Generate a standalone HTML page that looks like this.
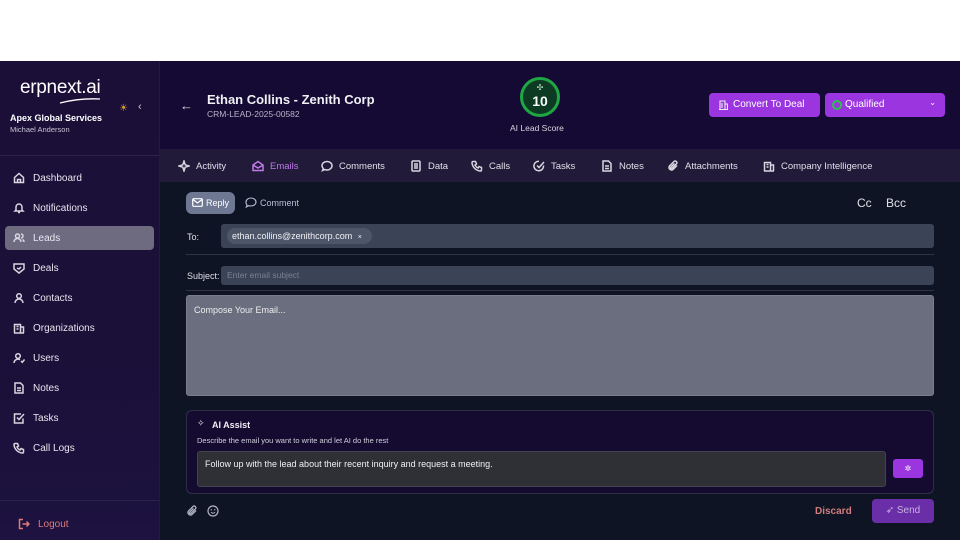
<!DOCTYPE html>
<html><head><meta charset="utf-8"><style>
*{box-sizing:border-box;margin:0;padding:0}
body{width:960px;height:540px;background:#fff;font-family:"Liberation Sans",sans-serif;position:relative;overflow:hidden;color:#e6e6ee}
.abs{position:absolute}
#sb{left:0;top:61px;width:160px;height:479px;background:linear-gradient(#1b0f38,#1a1038 60%,#1d1240);border-right:1px solid #241a3c}
#hdr{left:160px;top:61px;width:800px;height:88px;background:#150a33}
#tabs{left:160px;top:149px;width:800px;height:33px;background:#211a38}
#main{left:160px;top:182px;width:800px;height:358px;background:#0e1424}
.nav{position:absolute;left:13px;font-size:10px;color:#e8e6f0;display:flex;align-items:center;gap:8px}
.nav svg{width:12px;height:12px;stroke:#d8d6e0;fill:none;stroke-width:1.5}
.tab{position:absolute;top:160px;font-size:9.5px;color:#e0e0ea;display:flex;align-items:center;gap:6px}
.tab svg{width:12px;height:12px;stroke:#d8d6e0;fill:none;stroke-width:1.5}
.btn{position:absolute;top:32px;height:24px;background:#9a35e0;border-radius:4px;font-size:10px;color:#fff;line-height:24px}
</style></head><body>
<div id="sb" class="abs">
  <div class="abs" style="left:20px;top:16px;font-size:19px;color:#fff;letter-spacing:-0.3px">erpnext.ai</div>
  <svg class="abs" style="left:58px;top:36px" width="44" height="8"><path d="M2 6 Q22 1 42 2" stroke="#fff" fill="none" stroke-width="1.3"/></svg>
  <div class="abs" style="left:119px;top:42px;color:#e0a030;font-size:10px">☀</div>
  <div class="abs" style="left:138px;top:40px;color:#ccc;font-size:11px">‹</div>
  <div class="abs" style="left:10px;top:52px;font-size:9px;font-weight:bold;color:#fff">Apex Global Services</div>
  <div class="abs" style="left:10px;top:64px;font-size:7.5px;color:#c8c4d4">Michael Anderson</div>
  <div class="abs" style="left:0;top:94px;width:159px;height:1px;background:#2d2150"></div>
  <div class="abs" style="left:5px;top:165px;width:149px;height:24px;background:#6e6a80;border-radius:4px"></div>
  <div class="abs" style="left:0;top:439px;width:159px;height:1px;background:#2d2150"></div>
</div>
<div class="nav" style="top:172px"><svg viewBox="0 0 12 12"><path d="M1.5 5.5L6 1.5l4.5 4v5h-9z M4.5 10.5v-3h3v3"/></svg>Dashboard</div>
<div class="nav" style="top:202px"><svg viewBox="0 0 12 12"><path d="M3 8V5a3 3 0 016 0v3l1 1H2z M5 10.5h2"/></svg>Notifications</div>
<div class="nav" style="top:232px"><svg viewBox="0 0 12 12"><circle cx="4.5" cy="4" r="2"/><path d="M1 10a3.5 3.5 0 017 0 M8 2a2 2 0 010 4 M9.5 7.5a3 3 0 011.5 2.5"/></svg>Leads</div>
<div class="nav" style="top:262px"><svg viewBox="0 0 12 12"><path d="M1 2h10v5l-5 4-5-4z M4 6l2 1 2-2"/></svg>Deals</div>
<div class="nav" style="top:292px"><svg viewBox="0 0 12 12"><circle cx="6" cy="4" r="2.3"/><path d="M2 11a4 4 0 018 0"/></svg>Contacts</div>
<div class="nav" style="top:322px"><svg viewBox="0 0 12 12"><path d="M1.5 11V2.5h6V11 M7.5 5h3V11 M1 11h10 M3.5 4.5h2 M3.5 7h2"/></svg>Organizations</div>
<div class="nav" style="top:352px"><svg viewBox="0 0 12 12"><circle cx="5" cy="4" r="2.3"/><path d="M1 11a4 4 0 016-3.3 M8 9l1.3 1.3L11.5 7.5"/></svg>Users</div>
<div class="nav" style="top:382px"><svg viewBox="0 0 12 12"><path d="M2 1h5.5L10 3.5V11H2z M4 6h4 M4 8.5h4"/></svg>Notes</div>
<div class="nav" style="top:412px"><svg viewBox="0 0 12 12"><path d="M10 6.5V11H1.5V2H8 M4 5.5l2 2L11 2"/></svg>Tasks</div>
<div class="nav" style="top:442px"><svg viewBox="0 0 12 12"><path d="M2 1.5h2.5l1 2.5-1.5 1a6 6 0 003 3l1-1.5 2.5 1V10a1 1 0 01-1 1A9 9 0 011 2.5a1 1 0 011-1z"/></svg>Call Logs</div>
<div class="nav" style="top:518px;left:18px;color:#e07a7a"><svg viewBox="0 0 12 12" style="stroke:#e07a7a"><path d="M5 1.5H1.5v9H5 M4.5 6h6.5 M8.5 3.5L11 6 8.5 8.5"/></svg>Logout</div>

<div id="hdr" class="abs">
  <div class="abs" style="left:20px;top:37px;color:#ddd;font-size:13px">←</div>
  <div class="abs" style="left:47px;top:31px;font-size:13px;font-weight:bold;color:#f0f0f5">Ethan Collins - Zenith Corp</div>
  <div class="abs" style="left:47px;top:48px;font-size:8.5px;color:#b8b4c8">CRM-LEAD-2025-00582</div>
  <div class="abs" style="left:360px;top:16px;width:40px;height:40px;border-radius:50%;border:3px solid #1fa745;background:#0c3a22;text-align:center">
    <div style="font-size:8px;color:#bfe0c8;line-height:12px;margin-top:2px">✣</div>
    <div style="font-size:14px;font-weight:bold;color:#fff;line-height:14px">10</div>
  </div>
  <div class="abs" style="left:350px;top:62px;font-size:8.5px;color:#d8d6e0">AI Lead Score</div>
  <div class="btn" style="left:549px;width:111px;padding-left:24px">Convert To Deal</div>
  <svg class="abs" style="left:559px;top:39px" width="9" height="10"><path d="M1 9.5V1h5v8.5 M6 4h2.5v5.5 M0 9.5h9 M3 3v5" stroke="#eee" fill="none" stroke-width="1.1"/></svg>
  <div class="btn" style="left:665px;width:120px;padding-left:20px">Qualified<span style="position:absolute;right:9px;top:-2px;font-size:8px">⌄</span></div>
  <div class="abs" style="left:672px;top:39px;width:10px;height:10px;border-radius:50%;border:2.5px solid #2dc04a"></div>
</div>
<div id="tabs" class="abs"></div>
<div class="tab" style="left:178px"><svg viewBox="0 0 12 12"><path d="M6 1l1.2 3.8L11 6 7.2 7.2 6 11 4.8 7.2 1 6l3.8-1.2z"/></svg>Activity</div>
<div class="tab" style="left:252px;color:#c07ae8"><svg viewBox="0 0 12 12" style="stroke:#c07ae8"><path d="M1 5l5-3.5L11 5v5.5H1z M1 5l5 3 5-3"/></svg>Emails</div>
<div class="tab" style="left:321px"><svg viewBox="0 0 12 12"><path d="M6 1.5c2.8 0 5 1.9 5 4.2S8.8 10 6 10c-.8 0-1.6-.1-2.2-.4L1.5 10.5l.8-2A4 4 0 011 5.7C1 3.4 3.2 1.5 6 1.5z"/></svg>Comments</div>
<div class="tab" style="left:410px"><svg viewBox="0 0 12 12"><rect x="2" y="1" width="8" height="10" rx="1"/><path d="M4 4h4M4 6h4M4 8h4"/></svg>Data</div>
<div class="tab" style="left:471px"><svg viewBox="0 0 12 12"><path d="M2 1.5h2.5l1 2.5-1.5 1a6 6 0 003 3l1-1.5 2.5 1V10a1 1 0 01-1 1A9 9 0 011 2.5a1 1 0 011-1z"/></svg>Calls</div>
<div class="tab" style="left:533px"><svg viewBox="0 0 12 12"><path d="M10.5 5.5A4.8 4.8 0 116 1.2 M4 5.5l2 2L11 2"/></svg>Tasks</div>
<div class="tab" style="left:601px"><svg viewBox="0 0 12 12"><path d="M2 1h5.5L10 3.5V11H2z M4 6h4 M4 8.5h4"/></svg>Notes</div>
<div class="tab" style="left:667px"><svg viewBox="0 0 12 12"><path d="M10 5.5L6 9.5a2.5 2.5 0 01-3.5-3.5L7 1.5a1.7 1.7 0 012.4 2.4L5 8.3a.8.8 0 01-1.2-1.2L7.5 3.5"/></svg>Attachments</div>
<div class="tab" style="left:763px"><svg viewBox="0 0 12 12"><path d="M1.5 11V2.5h6V11 M7.5 5h3V11 M1 11h10 M3.5 4.5h2 M3.5 7h2"/></svg>Company Intelligence</div>

<div id="main" class="abs">
  <div class="abs" style="left:26px;top:10px;width:49px;height:22px;background:#6e7892;border-radius:6px;font-size:9px;color:#fff;line-height:22px;padding-left:20px">Reply</div>
  <svg class="abs" style="left:32px;top:16px" width="11" height="9"><rect x=".7" y=".7" width="9.6" height="7.6" rx="1" fill="none" stroke="#fff" stroke-width="1.2"/><path d="M1 1.5l4.5 3.5L10 1.5" fill="none" stroke="#fff" stroke-width="1.2"/></svg>
  <svg class="abs" style="left:85px;top:15px" width="12" height="11"><path d="M6 1c2.8 0 5 1.8 5 4s-2.2 4-5 4c-.8 0-1.5-.1-2.1-.4L1.3 10l.7-2A3.8 3.8 0 011 5c0-2.2 2.2-4 5-4z" fill="none" stroke="#b8c0d8" stroke-width="1.1"/></svg>
  <div class="abs" style="left:100px;top:16px;font-size:9px;color:#b8c0d8">Comment</div>
  <div class="abs" style="left:697px;top:14px;font-size:12px;color:#e0e0e8">Cc</div>
  <div class="abs" style="left:726px;top:14px;font-size:12px;color:#e0e0e8">Bcc</div>
  <div class="abs" style="left:27px;top:50px;font-size:9px;color:#e0e0e8">To:</div>
  <div class="abs" style="left:61px;top:42px;width:713px;height:24px;background:#3b4356;border-radius:3px"></div>
  <div class="abs" style="left:67px;top:46px;width:145px;height:16px;background:#4d5568;border-radius:8px;font-size:9px;color:#f0f0f5;line-height:16px;padding-left:5px">ethan.collins@zenithcorp.com <span style="font-size:7px;margin-left:3px">×</span></div>
  <div class="abs" style="left:26px;top:72px;width:748px;height:1px;background:#2e3446"></div>
  <div class="abs" style="left:27px;top:89px;font-size:9px;color:#e0e0e8">Subject:</div>
  <div class="abs" style="left:61px;top:84px;width:713px;height:19px;background:#3b4356;border-radius:3px;font-size:8.5px;color:#7a8196;line-height:19px;padding-left:6px">Enter email subject</div>
  <div class="abs" style="left:26px;top:108px;width:748px;height:1px;background:#2e3446"></div>
  <div class="abs" style="left:26px;top:113px;width:748px;height:101px;background:#6b6e7e;border-radius:3px;border:1px solid #7a7d8c;font-size:9px;color:#eee;padding:9px 7px">Compose Your Email...</div>
  <div class="abs" style="left:26px;top:228px;width:748px;height:84px;background:#150b30;border:1px solid #2e3048;border-radius:6px">
    <div class="abs" style="left:10px;top:7px;font-size:9px;color:#eee">✧</div>
    <div class="abs" style="left:25px;top:9px;font-size:9px;font-weight:bold;color:#f0f0f5">AI Assist</div>
    <div class="abs" style="left:10px;top:25px;font-size:7.5px;color:#d0d0dc">Describe the email you want to write and let AI do the rest</div>
    <div class="abs" style="left:10px;top:40px;width:689px;height:36px;background:#2f2f36;border:1px solid #44444e;border-radius:3px;font-size:9px;color:#f0f0f5;padding:7px 7px">Follow up with the lead about their recent inquiry and request a meeting.</div>
    <div class="abs" style="left:706px;top:48px;width:30px;height:19px;background:#9a35e0;border-radius:3px;color:#fff;font-size:8px;text-align:center;line-height:19px">✲</div>
  </div>
  <svg class="abs" style="left:26px;top:323px" width="12" height="12"><path d="M10 5.5L6 9.5a2.5 2.5 0 01-3.5-3.5L7 1.5a1.7 1.7 0 012.4 2.4L5 8.3a.8.8 0 01-1.2-1.2L7.5 3.5" fill="none" stroke="#b0b4c4" stroke-width="1.3"/></svg>
  <svg class="abs" style="left:47px;top:323px" width="12" height="12"><circle cx="6" cy="6" r="5" fill="none" stroke="#b0b4c4" stroke-width="1.2"/><path d="M4 7.2a2.5 2.5 0 004 0" fill="none" stroke="#b0b4c4"/><circle cx="4.3" cy="4.8" r=".7" fill="#b0b4c4"/><circle cx="7.7" cy="4.8" r=".7" fill="#b0b4c4"/></svg>
  <div class="abs" style="left:655px;top:324px;font-size:10px;color:#d07c7c;font-weight:bold">Discard</div>
  <div class="abs" style="left:712px;top:317px;width:62px;height:24px;background:#6a2fa8;border-radius:4px;font-size:10px;color:#c8b0e0;line-height:24px;text-align:center">➶ Send</div>
</div>
</body></html>
